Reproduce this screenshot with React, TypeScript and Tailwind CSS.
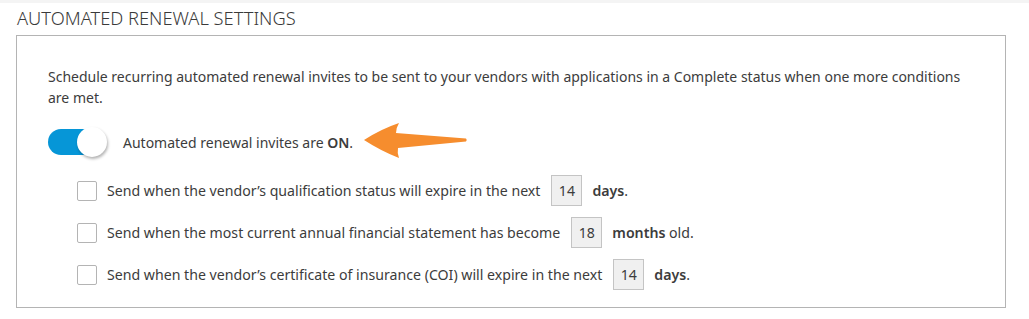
import React from 'react';

const rows = [
  { pre: 'Send when the vendor’s qualification status will expire in the next', value: '14', unit: 'days', post: '.' },
  { pre: 'Send when the most current annual financial statement has become', value: '18', unit: 'months', post: ' old.' },
  { pre: 'Send when the vendor’s certificate of insurance (COI) will expire in the next', value: '14', unit: 'days', post: '.' },
];

function Arrow() {
  return (
    <svg width="106" height="40" viewBox="0 0 106 40" className="ml-[10px] -mt-[2px]">
      <path
        d="M1 19 Q18 8 36 2 Q33 7 33 12 L103 17.5 Q104.5 19 103 20.5 L35 27 Q34 32 36 37 Q18 30 1 19 Z"
        fill="#f68d2e"
      />
    </svg>
  );
}

export default function App() {
  return (
    <div className="bg-white w-[1029px] h-[319px] text-[#3c3c3c]" style={{ fontFamily: '"Noto Sans", "Open Sans", sans-serif' }}>
      <div className="h-[3px] bg-[#f4f4f4]" />
      <h2 className="pl-[17px] pt-[2px] h-[32px] text-[18.3px] leading-[26px] font-light text-[#3a3a3a]">
        AUTOMATED RENEWAL SETTINGS
      </h2>
      <div className="ml-[16px] w-[990px] h-[273px] border border-[#b4b4b4] pl-[31px] pr-[30px] pt-[30px]">
        <p className="text-[14px] leading-[21px]">
          Schedule recurring automated renewal invites to be sent to your vendors with applications in a Complete status when one more conditions are met.
        </p>
        <div className="flex items-center h-[34px] mt-[17px]">
          <button className="relative w-[56px] h-[26px] rounded-full bg-[#0696d7]">
            <span className="absolute left-[29px] top-[-2px] w-[30px] h-[30px] rounded-full bg-white shadow-[1px_2px_3px_rgba(0,0,0,0.3)]" />
          </button>
          <span className="ml-[19px] text-[14px]">
            Automated renewal invites are <b className="font-semibold">ON</b>.
          </span>
          <Arrow />
        </div>
        <div className="mt-[16px] pl-[29px] flex flex-col gap-[11px]">
          {rows.map((r, i) => (
            <div key={i} className="flex items-center h-[31px] text-[14.15px]">
              <span className="w-[20px] h-[20px] border border-[#b4b4b4] rounded-[2px] bg-white" />
              <span className="ml-[10px]">{r.pre}</span>
              <span className="ml-[11px] w-[31px] h-[31px] border border-[#c4c4c4] bg-[#f0f0f0] flex items-center justify-center">{r.value}</span>
              <span className="ml-[10px]"><b className="font-semibold">{r.unit}</b>{r.post}</span>
            </div>
          ))}
        </div>
      </div>
    </div>
  );
}
